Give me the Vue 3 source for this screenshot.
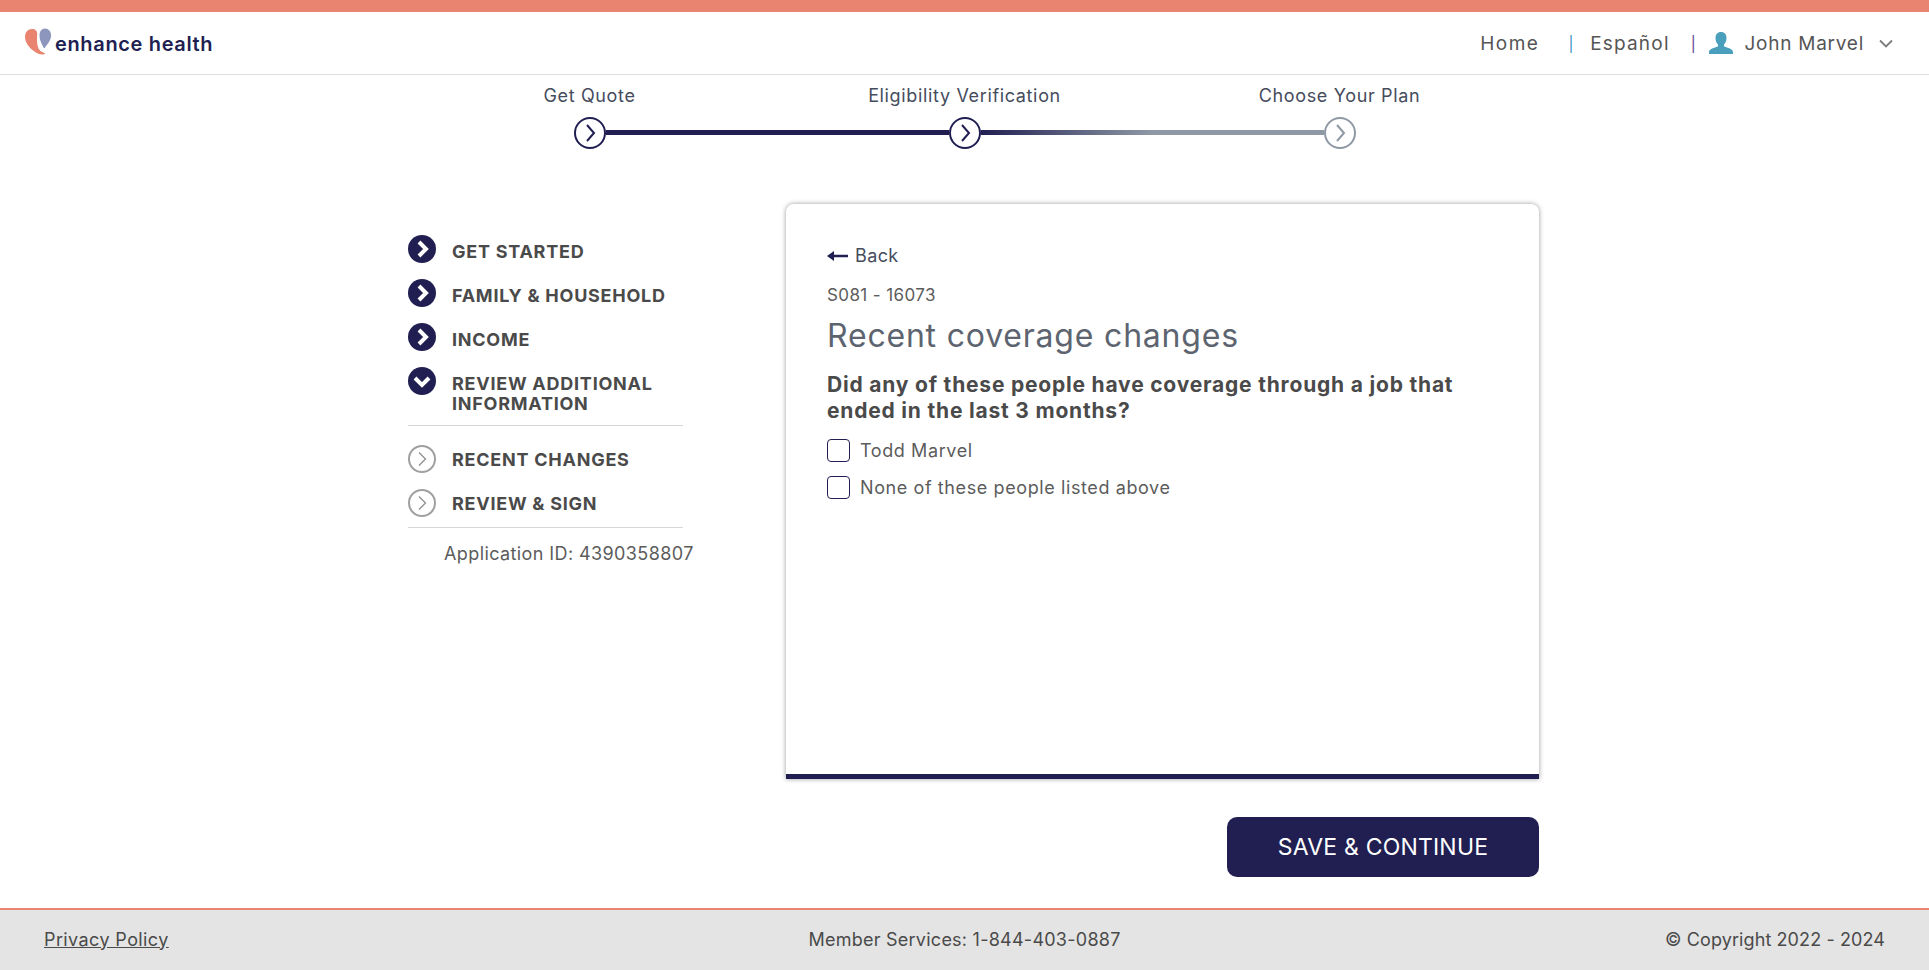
<template>
  <div class="page">
    <header class="topbar">
      <div class="logo">
        <svg class="logo-mark" width="28" height="27" viewBox="0 0 28 27">
          <path d="M7 1C3 1 0 4 0 9c0 7 7 14 14 17 2 .7 6 .6 6-.6 0-1-3-1-5-3-2-2-3-6-3-11 0-4 1-7-1-9C10 1.500 8.500 1 7 1z" fill="#e8846f" />
          <path d="M20 .5c-3.500 0-5.500 3-5.500 7 0 5 2.500 9 4 12 .5 1 1 1 1.600 0 2-3 6-7 6-12 0-4-2.600-7-6.100-7z" fill="#8d97bd" />
        </svg>
        <span class="logo-text">enhance health</span>
      </div>
      <nav class="nav">
        <a class="nav-home">Home</a>
        <span class="sep blue">|</span>
        <a class="nav-lang">Español</a>
        <span class="sep purple">|</span>
        <svg class="user" width="24" height="22" viewBox="0 0 24 22">
          <path d="M12 0c3.500 0 5.500 2.600 5.500 6 0 2.600-1 5-2.500 6.500v1.700c2 1.300 9 2 9 5.800v2H0v-2c0-3.800 7-4.500 9-5.800v-1.700C7.500 11 6.500 8.600 6.500 6 6.500 2.600 8.500 0 12 0z" fill="#4a9fbc" />
        </svg>
        <a class="nav-user">John Marvel</a>
        <svg class="caret" width="14" height="9" viewBox="0 0 14 9">
          <path d="M1 1.500l6 6 6-6" fill="none" stroke="#7c7c7c" stroke-width="1.800" />
        </svg>
      </nav>
    </header>

    <section class="stepper">
      <div class="step-labels">
        <span v-for="s in steps" :key="s">{{ s }}</span>
      </div>
      <div class="step-track">
        <span class="step-dot">
          <svg width="14" height="20" viewBox="0 0 14 20"><path d="M4 2l7 8-7 8" fill="none" stroke="#211f52" stroke-width="2" /></svg>
        </span>
        <span class="bar done"></span>
        <span class="step-dot">
          <svg width="14" height="20" viewBox="0 0 14 20"><path d="M4 2l7 8-7 8" fill="none" stroke="#211f52" stroke-width="2" /></svg>
        </span>
        <span class="bar partial"></span>
        <span class="step-dot todo">
          <svg width="14" height="20" viewBox="0 0 14 20"><path d="M4 2l7 8-7 8" fill="none" stroke="#8f99a5" stroke-width="2" /></svg>
        </span>
      </div>
    </section>

    <main class="content">
      <aside class="side">
        <div v-for="item in doneItems" :key="item" class="side-row">
          <span class="ball">
            <svg width="16" height="20" viewBox="0 0 16 20"><path d="M5 3l7 7-7 7" fill="none" stroke="#fff" stroke-width="4" /></svg>
          </span>
          <span class="side-label">{{ item }}</span>
        </div>
        <div class="side-row open">
          <span class="ball">
            <svg width="20" height="16" viewBox="0 0 20 16"><path d="M3 5l7 7 7-7" fill="none" stroke="#fff" stroke-width="4" /></svg>
          </span>
          <span class="side-label">REVIEW ADDITIONAL INFORMATION</span>
        </div>
        <div class="side-sub">
          <div v-for="item in todoItems" :key="item" class="side-row">
            <span class="ball ring">
              <svg width="12" height="16" viewBox="0 0 12 16"><path d="M3 1.500L9.500 8 3 14.500" fill="none" stroke="#8e8e8e" stroke-width="1.300" /></svg>
            </span>
            <span class="side-label">{{ item }}</span>
          </div>
        </div>
        <p class="app-id">Application ID: 4390358807</p>
      </aside>

      <div class="col">
        <div class="card">
          <a class="back">
            <svg width="21" height="10" viewBox="0 0 21 10"><path d="M0 5l7-5v3.800h14v2.400H7V10z" fill="#211f52" /></svg>
            Back
          </a>
          <p class="code">S081 - 16073</p>
          <h1>Recent coverage changes</h1>
          <p class="question">Did any of these people have coverage through a job that ended in the last 3 months?</p>
          <label v-for="o in options" :key="o" class="check">
            <span class="box"></span>
            <span>{{ o }}</span>
          </label>
        </div>
        <div class="actions">
          <button class="save">SAVE &amp; CONTINUE</button>
        </div>
      </div>
    </main>

    <footer class="foot">
      <a class="privacy">Privacy Policy</a>
      <span>Member Services: 1-844-403-0887</span>
      <span class="copy">© Copyright 2022 - 2024</span>
    </footer>
  </div>
</template>

<script setup>
const steps = ['Get Quote', 'Eligibility Verification', 'Choose Your Plan']
const doneItems = ['GET STARTED', 'FAMILY & HOUSEHOLD', 'INCOME']
const todoItems = ['RECENT CHANGES', 'REVIEW & SIGN']
const options = ['Todd Marvel', 'None of these people listed above']
</script>

<style>
body {
  margin: 0;
  background: #fff;
}
</style>

<style scoped>
.page {
  min-height: 970px;
  display: flex;
  flex-direction: column;
  font-family: Inter, "Open Sans", sans-serif;
  color: #4a4a4a;
}
.topbar {
  height: 62px;
  border-top: 12px solid #e8846f;
  border-bottom: 1px solid #ddd;
  display: flex;
  align-items: center;
  justify-content: space-between;
  padding: 0 36px 0 25px;
}
.logo {
  display: flex;
  align-items: center;
  gap: 2px;
}
.logo-mark {
  margin-top: -3px;
}
.logo-text {
  font-size: 20px;
  font-weight: 600;
  color: #211f52;
  letter-spacing: 0.65px;
  padding-top: 1px;
}
.nav {
  display: flex;
  align-items: center;
  font-size: 19px;
  letter-spacing: 0.75px;
  color: #555;
}
.nav-home {
  letter-spacing: 1.5px;
}
.nav-lang {
  letter-spacing: 1.2px;
}
.sep {
  font-size: 15px;
}
.sep.blue {
  color: #3a8fc4;
  margin: 0 16px 0 29px;
}
.sep.purple {
  color: #5a3a8a;
  margin: 0 13px 0 21px;
}
.user {
  margin-right: 11px;
}
.caret {
  margin-left: 15px;
}
.stepper {
  margin-top: 9px;
}
.step-labels {
  display: grid;
  grid-template-columns: repeat(3, 375px);
  justify-content: center;
  text-align: center;
  font-size: 18px;
  line-height: 24px;
  letter-spacing: 0.65px;
  color: #454c5c;
}
.step-track {
  width: 782px;
  margin: 9px auto 0;
  display: flex;
  align-items: center;
}
.step-dot {
  width: 32px;
  height: 32px;
  box-sizing: border-box;
  border: 2px solid #211f52;
  border-radius: 50%;
  display: flex;
  align-items: center;
  justify-content: center;
  flex-shrink: 0;
}
.step-dot.todo {
  border-color: #8f99a5;
}
.bar {
  flex: 1;
  height: 5px;
  margin-top: -1px;
}
.bar.done {
  background: #211f52;
}
.bar.partial {
  background: linear-gradient(to right, #211f52 0%, #8f99a5 50%, #8f99a5 100%);
}
.content {
  flex: 1;
  display: flex;
  padding: 55px 0 0 408px;
  gap: 103px;
}
.side {
  width: 275px;
  padding-top: 31px;
}
.side-row {
  display: flex;
  gap: 16px;
  min-height: 28px;
  margin-bottom: 16px;
}
.side-row.open {
  padding-bottom: 11px;
  border-bottom: 1px solid #d6d6d6;
  margin-bottom: 19px;
}
.side-sub {
  border-bottom: 1px solid #d6d6d6;
  padding-bottom: 10px;
}
.side-sub .side-row:last-child {
  margin-bottom: 0;
}
.ball {
  width: 28px;
  height: 28px;
  flex-shrink: 0;
  box-sizing: border-box;
  border-radius: 50%;
  background: #211f52;
  display: flex;
  align-items: center;
  justify-content: center;
}
.ball.ring {
  background: #fff;
  border: 2px solid #a0a0a0;
}
.side-label {
  font-size: 18px;
  font-weight: 700;
  line-height: 20px;
  letter-spacing: 0.75px;
  color: #4a4a4a;
  padding-top: 7px;
}
.side-sub .side-label {
  padding-top: 5px;
}
.app-id {
  margin: 16px 0 0 36px;
  font-size: 18px;
  line-height: 20px;
  letter-spacing: 0.4px;
  white-space: nowrap;
  color: #5c5c5c;
}
.col {
  width: 753px;
}
.card {
  height: 575px;
  box-sizing: border-box;
  padding: 41px 41px 0;
  background: #fff;
  border-radius: 8px 8px 0 0;
  border-bottom: 5px solid #211f52;
  box-shadow: 0 0 5px rgba(0, 0, 0, 0.4);
}
.back {
  display: flex;
  align-items: center;
  gap: 7px;
  font-size: 18px;
  line-height: 22px;
  letter-spacing: 0.4px;
  color: #454c5c;
}
.code {
  margin: 17px 0 0;
  font-size: 17px;
  line-height: 22px;
  letter-spacing: 0.4px;
  color: #5c5c5c;
}
h1 {
  margin: 10px 0 0;
  font-size: 32px;
  font-weight: 400;
  line-height: 40px;
  letter-spacing: 0.8px;
  color: #5d6470;
}
.question {
  margin: 16px 0 0;
  font-size: 21px;
  font-weight: 700;
  line-height: 26px;
  color: #4a4a4a;
  letter-spacing: 0.8px;
}
.check {
  display: flex;
  align-items: center;
  gap: 10px;
  height: 23px;
  margin-top: 14px;
  font-size: 18px;
  letter-spacing: 0.6px;
  color: #5c5c5c;
}
.question + .check {
  margin-top: 15px;
}
.box {
  width: 23px;
  height: 23px;
  box-sizing: border-box;
  border: 1.500px solid #211f52;
  border-radius: 4px;
}
.actions {
  display: flex;
  justify-content: flex-end;
  margin-top: 38px;
}
.save {
  width: 312px;
  height: 60px;
  border: none;
  border-radius: 10px;
  background: #211f52;
  color: #fff;
  font-family: inherit;
  font-size: 23px;
  letter-spacing: 0.2px;
}
.foot {
  height: 62px;
  box-sizing: border-box;
  border-top: 2px solid #e8846f;
  background: #e4e4e4;
  display: grid;
  grid-template-columns: 1fr auto 1fr;
  align-items: center;
  padding: 0 44px 2px;
  font-size: 18px;
  letter-spacing: 0.25px;
  color: #4a4a4a;
}
.privacy {
  text-decoration: underline;
  letter-spacing: 0.4px;
}
.copy {
  text-align: right;
  letter-spacing: 0.1px;
}
</style>
